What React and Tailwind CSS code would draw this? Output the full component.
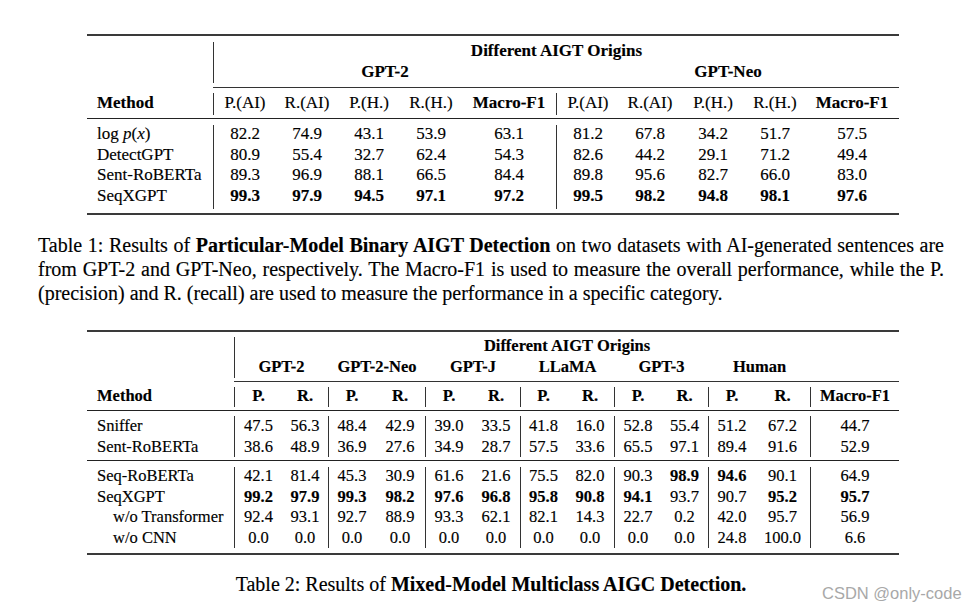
import React from "react";

const serif = "font-['Liberation_Serif','Times_New_Roman',serif] [-webkit-text-stroke:0.15px_black]";

function VLine({ cls }) {
  return <div className={"w-px shrink-0 bg-[#333] " + cls} />;
}

function Cell({ v, w }) {
  const bold = v.startsWith("*");
  const t = bold ? v.slice(1) : v;
  return <div className={w + " text-center " + (bold ? "font-bold" : "")}>{t}</div>;
}

/* ---------------- Table 1 ---------------- */
const T1W = [
  ["w-[62px]", "w-[62px]", "w-[62px]", "w-[62px]", "w-[94px]"],
  ["w-[62px]", "w-[62px]", "w-[64px]", "w-[60px]", "w-[94px]"],
];
const T1H = ["P.(AI)", "R.(AI)", "P.(H.)", "R.(H.)", "Macro-F1"];
const T1ROWS = [
  { m: "log", d: [["82.2", "74.9", "43.1", "53.9", "63.1"], ["81.2", "67.8", "34.2", "51.7", "57.5"]] },
  { m: "DetectGPT", d: [["80.9", "55.4", "32.7", "62.4", "54.3"], ["82.6", "44.2", "29.1", "71.2", "49.4"]] },
  { m: "Sent-RoBERTa", d: [["89.3", "96.9", "88.1", "66.5", "84.4"], ["89.8", "95.6", "82.7", "66.0", "83.0"]] },
  { m: "SeqXGPT", d: [["*99.3", "*97.9", "*94.5", "*97.1", "*97.2"], ["*99.5", "*98.2", "*94.8", "*98.1", "*97.6"]] },
];

function LogPx() {
  return (
    <span>
      log <i>p</i>(<i>x</i>)
    </span>
  );
}

function Table1() {
  return (
    <div className={"w-[812px] ml-[87px] text-[17px] text-black " + serif}>
      <div className="h-[2px] bg-[#3a3a3a]" />
      {/* header A */}
      <div className="flex h-[51px]">
        <div className="w-[126px] shrink-0" />
        <VLine cls="mt-[6px] mb-[4px]" />
        <div className="flex-1 pt-[4px] leading-[21px] font-bold">
          <div className="text-center">Different AIGT Origins</div>
          <div className="flex">
            <div className="w-[342px] text-center">GPT-2</div>
            <div className="w-px" />
            <div className="w-[342px] text-center">GPT-Neo</div>
          </div>
        </div>
      </div>
      {/* cmidrule */}
      <div className="flex">
        <div className="w-[126px] shrink-0" />
        <div className="flex-1 h-px bg-[#333]" />
      </div>
      {/* header B */}
      <div className="flex h-[30px] leading-[21px]">
        <div className="w-[126px] shrink-0 pl-[10px] pt-[4px] font-bold">Method</div>
        <VLine cls="mt-[5px] mb-[3px]" />
        {T1H.map((h, i) => (
          <div key={i} className={T1W[0][i] + " text-center pt-[4px] " + (i === 4 ? "font-bold" : "")}>{h}</div>
        ))}
        <VLine cls="mt-[5px] mb-[3px]" />
        {T1H.map((h, i) => (
          <div key={i} className={T1W[1][i] + " text-center pt-[4px] " + (i === 4 ? "font-bold" : "")}>{h}</div>
        ))}
      </div>
      <div className="h-px bg-[#222]" />
      {/* data */}
      <div className="flex h-[94px] leading-[20.7px]">
        <div className="w-[126px] shrink-0 pl-[10px] pt-[5px]">
          {T1ROWS.map((r, i) => (
            <div key={i}>{r.m === "log" ? <LogPx /> : r.m}</div>
          ))}
        </div>
        <VLine cls="mt-[6px] mb-[4px]" />
        {[0, 1, 2, 3, 4].map((c) => (
          <div key={c} className="pt-[5px]">
            {T1ROWS.map((r, i) => (
              <Cell key={i} v={r.d[0][c]} w={T1W[0][c]} />
            ))}
          </div>
        ))}
        <VLine cls="mt-[6px] mb-[4px]" />
        {[0, 1, 2, 3, 4].map((c) => (
          <div key={c} className="pt-[5px]">
            {T1ROWS.map((r, i) => (
              <Cell key={i} v={r.d[1][c]} w={T1W[1][c]} />
            ))}
          </div>
        ))}
      </div>
      <div className="h-[2px] bg-[#3a3a3a]" />
    </div>
  );
}

/* ---------------- Table 2 ---------------- */
const T2G = [
  { n: "GPT-2", w: ["w-[47px]", "w-[46px]"], gw: "w-[93px]" },
  { n: "GPT-2-Neo", w: ["w-[46px]", "w-[50px]"], gw: "w-[96px]" },
  { n: "GPT-J", w: ["w-[46px]", "w-[48px]"], gw: "w-[94px]" },
  { n: "LLaMA", w: ["w-[45px]", "w-[48px]"], gw: "w-[93px]" },
  { n: "GPT-3", w: ["w-[46px]", "w-[47px]"], gw: "w-[93px]" },
  { n: "Human", w: ["w-[46px]", "w-[55px]"], gw: "w-[101px]" },
];

const T2A = [
  { m: "Sniffer", d: ["47.5", "56.3", "48.4", "42.9", "39.0", "33.5", "41.8", "16.0", "52.8", "55.4", "51.2", "67.2", "44.7"] },
  { m: "Sent-RoBERTa", d: ["38.6", "48.9", "36.9", "27.6", "34.9", "28.7", "57.5", "33.6", "65.5", "97.1", "89.4", "91.6", "52.9"] },
];
const T2B = [
  { m: "Seq-RoBERTa", d: ["42.1", "81.4", "45.3", "30.9", "61.6", "21.6", "75.5", "82.0", "90.3", "*98.9", "*94.6", "90.1", "64.9"] },
  { m: "SeqXGPT", d: ["*99.2", "*97.9", "*99.3", "*98.2", "*97.6", "*96.8", "*95.8", "*90.8", "*94.1", "93.7", "90.7", "*95.2", "*95.7"] },
  { m: "w/o Transformer", sub: true, d: ["92.4", "93.1", "92.7", "88.9", "93.3", "62.1", "82.1", "14.3", "22.7", "0.2", "42.0", "95.7", "56.9"] },
  { m: "w/o CNN", sub: true, d: ["0.0", "0.0", "0.0", "0.0", "0.0", "0.0", "0.0", "0.0", "0.0", "0.0", "24.8", "100.0", "6.6"] },
];

function DataBlock2({ rows, h, vl }) {
  return (
    <div className={"flex leading-[20.7px] " + h}>
      <div className="w-[147px] shrink-0 pt-[5px]">
        {rows.map((r, i) => (
          <div key={i} className={r.sub ? "pl-[26px]" : "pl-[10px]"}>{r.m}</div>
        ))}
      </div>
      {T2G.map((g, gi) => (
        <React.Fragment key={gi}>
          <VLine cls={vl} />
          {[0, 1].map((k) => (
            <div key={k} className="pt-[5px]">
              {rows.map((r, i) => (
                <Cell key={i} v={r.d[gi * 2 + k]} w={g.w[k]} />
              ))}
            </div>
          ))}
        </React.Fragment>
      ))}
      <VLine cls={vl} />
      <div className="pt-[5px]">
        {rows.map((r, i) => (
          <Cell key={i} v={r.d[12]} w="w-[88px]" />
        ))}
      </div>
    </div>
  );
}

function Table2() {
  return (
    <div className={"w-[812px] ml-[87px] text-[16.5px] text-black " + serif}>
      <div className="h-[2px] bg-[#3a3a3a]" />
      {/* header A */}
      <div className="flex h-[49px]">
        <div className="w-[147px] shrink-0" />
        <VLine cls="mt-[5px] mb-[3px]" />
        <div className="flex-1 pt-[3px] leading-[21px] font-bold">
          <div className="text-center">Different AIGT Origins</div>
          <div className="flex">
            {T2G.map((g, gi) => (
              <React.Fragment key={gi}>
                <div className={g.gw + " text-center"}>{g.n}</div>
                <div className="w-px" />
              </React.Fragment>
            ))}
          </div>
        </div>
      </div>
      {/* cmidrule */}
      <div className="flex">
        <div className="w-[147px] shrink-0" />
        <div className="flex-1 h-px bg-[#333]" />
      </div>
      {/* header B */}
      <div className="flex h-[28px] leading-[21px] font-bold">
        <div className="w-[147px] shrink-0 pl-[10px] pt-[3px]">Method</div>
        {T2G.map((g, gi) => (
          <React.Fragment key={gi}>
            <VLine cls="mt-[5px] mb-[3px]" />
            <div className={g.w[0] + " text-center pt-[3px]"}>P.</div>
            <div className={g.w[1] + " text-center pt-[3px]"}>R.</div>
          </React.Fragment>
        ))}
        <VLine cls="mt-[5px] mb-[3px]" />
        <div className="w-[88px] text-center pt-[3px]">Macro-F1</div>
      </div>
      <div className="h-px bg-[#222]" />
      <DataBlock2 rows={T2A} h="h-[49px]" vl="mt-[5px] mb-[3px]" />
      <div className="h-px bg-[#222]" />
      <DataBlock2 rows={T2B} h="h-[92px]" vl="mt-[6px] mb-[5px]" />
      <div className="h-[2px] bg-[#3a3a3a]" />
    </div>
  );
}

export default function App() {
  return (
    <div className="relative w-[975px] h-[611px] overflow-hidden bg-white pt-[34px]">
      <Table1 />
      <div className={"mt-[18px] ml-[38px] w-[906px] text-[20px] leading-[24px] text-black " + serif}>
        <div className="text-justify [text-align-last:justify]">
          Table 1: Results of <b>Particular-Model Binary AIGT Detection</b> on two datasets with AI-generated sentences are
        </div>
        <div className="text-justify [text-align-last:justify]">
          from GPT-2 and GPT-Neo, respectively. The Macro-F1 is used to measure the overall performance, while the P.
        </div>
        <div>(precision) and R. (recall) are used to measure the performance in a specific category.</div>
      </div>
      <div className="mt-[25px]">
        <Table2 />
      </div>
      <div className={"mt-[17px] ml-[38px] w-[906px] text-center text-[20px] leading-[24px] text-black " + serif}>
        Table 2: Results of <b>Mixed-Model Multiclass AIGC Detection.</b>
      </div>
      <div className="absolute left-[822px] top-[583px] text-[16.5px] leading-[20px] text-[#a8a8a8] font-['Liberation_Sans',Arial,sans-serif]">
        CSDN @only-code
      </div>
    </div>
  );
}
